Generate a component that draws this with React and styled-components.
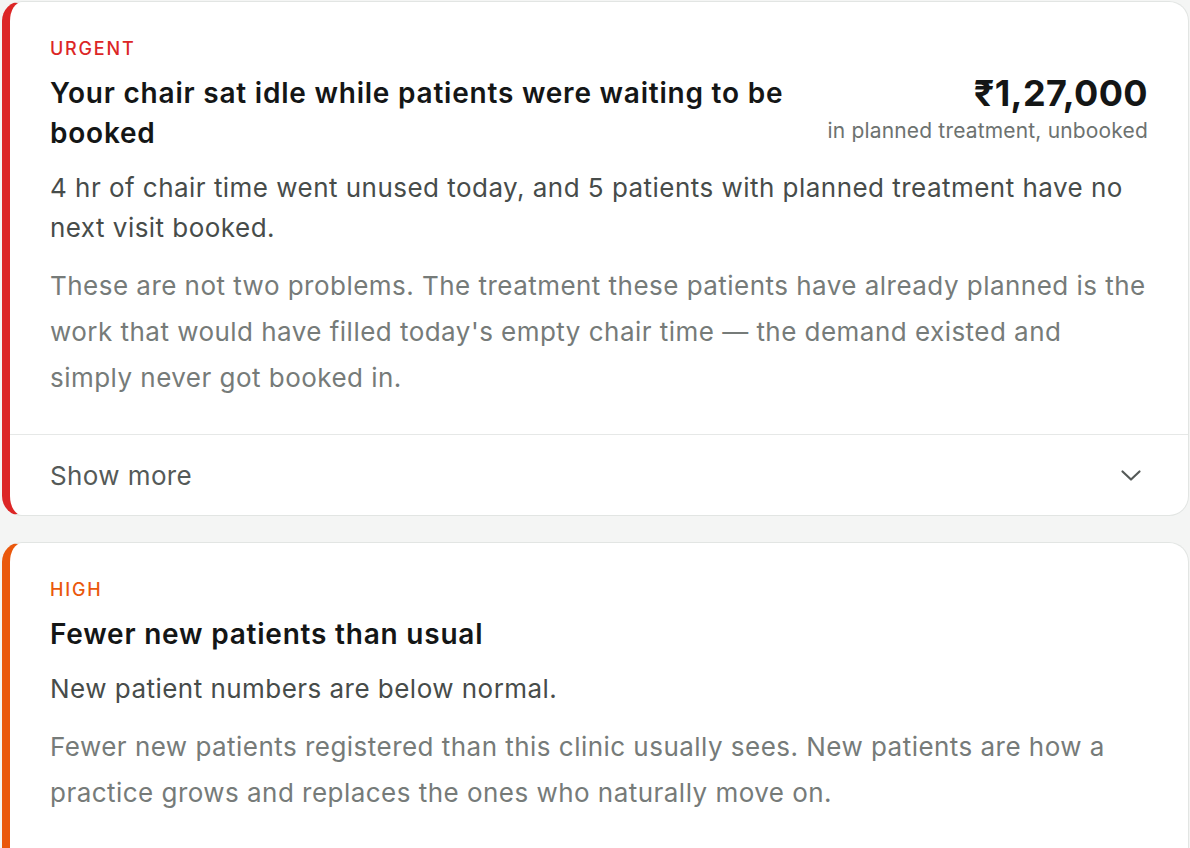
import React from "react"
import styled, { createGlobalStyle } from "styled-components"

const GlobalStyles = createGlobalStyle`
  html, body {
    margin: 0;
    padding: 0;
    background: #f4f5f4;
  }
  body {
    font-family: Inter, "Open Sans", "Liberation Sans", sans-serif;
    -webkit-font-smoothing: antialiased;
  }
`

const levels = {
  urgent: { label: "URGENT", color: "#dc2626" },
  high: { label: "HIGH", color: "#ea580c" },
}

const insights = [
  {
    level: "urgent",
    title: "Your chair sat idle while patients were waiting to be booked",
    amount: "₹1,27,000",
    amountNote: "in planned treatment, unbooked",
    summary:
      "4 hr of chair time went unused today, and 5 patients with planned treatment have no next visit booked.",
    detail:
      "These are not two problems. The treatment these patients have already planned is the work that would have filled today's empty chair time — the demand existed and simply never got booked in.",
  },
  {
    level: "high",
    title: "Fewer new patients than usual",
    summary: "New patient numbers are below normal.",
    detail:
      "Fewer new patients registered than this clinic usually sees. New patients are how a practice grows and replaces the ones who naturally move on.",
  },
]

const ChevronDown = () => (
  <svg width="24" height="24" viewBox="0 0 24 24" fill="none" stroke="currentColor" strokeWidth="2.2" strokeLinecap="round" strokeLinejoin="round">
    <path d="M3.5 8.5l8.5 8 8.5-8" />
  </svg>
)

class App extends React.Component {
  render() {
    return (
      <Page>
        <GlobalStyles />
        {insights.map((item, i) => (
          <Card key={i} accent={levels[item.level].color}>
            <CardBody>
              <Level color={levels[item.level].color}>{levels[item.level].label}</Level>
              <Header>
                <Title>{item.title}</Title>
                {item.amount && (
                  <Impact>
                    <Amount>{item.amount}</Amount>
                    <AmountNote>{item.amountNote}</AmountNote>
                  </Impact>
                )}
              </Header>
              <Summary>{item.summary}</Summary>
              <Detail>{item.detail}</Detail>
            </CardBody>
            <Toggle>
              <span>Show more</span>
              <ChevronDown />
            </Toggle>
          </Card>
        ))}
      </Page>
    )
  }
}

const Page = styled.div`
  display: flex;
  flex-direction: column;
  gap: 26px;
  padding: 1px 1px 40px 2px;
`

const Card = styled.div`
  background: #fff;
  border: 1px solid #e2e5e3;
  border-left: 8px solid ${p => p.accent};
  border-radius: 20px;
  overflow: hidden;
`

const CardBody = styled.div`
  padding: 35px 40px 33px 40px;
  display: flex;
  flex-direction: column;
`

const Level = styled.div`
  color: ${p => p.color};
  font-size: 18px;
  line-height: 24px;
  font-weight: 500;
  letter-spacing: 0.1em;
`

const Header = styled.div`
  display: flex;
  justify-content: space-between;
  align-items: flex-start;
  gap: 30px;
  margin-top: 12px;
`

const Title = styled.h2`
  margin: 0;
  max-width: 770px;
  font-size: 28px;
  line-height: 40px;
  font-weight: 600;
  color: #141616;
  letter-spacing: 0.028em;
`

const Impact = styled.div`
  display: flex;
  flex-direction: column;
  align-items: flex-end;
  flex-shrink: 0;
`

const Amount = styled.div`
  font-size: 36px;
  line-height: 40px;
  font-weight: 700;
  color: #141616;
  letter-spacing: 0.01em;
`

const AmountNote = styled.div`
  font-size: 21px;
  line-height: 26px;
  color: #6d7270;
  margin-top: 5px;
  letter-spacing: 0.008em;
`

const Summary = styled.p`
  margin: 15px 0 0;
  font-size: 26px;
  line-height: 40px;
  color: #474c4a;
  letter-spacing: 0.018em;
`

const Detail = styled.p`
  margin: 15px 0 0;
  font-size: 26px;
  line-height: 46px;
  color: #767b79;
  letter-spacing: 0.018em;
`

const Toggle = styled.div`
  display: flex;
  align-items: center;
  justify-content: space-between;
  height: 80px;
  padding: 0 45px 0 40px;
  border-top: 1px solid #e6e8e7;
  font-size: 26px;
  color: #555a58;
  letter-spacing: 0.015em;
  svg {
    color: #555a58;
  }
`

export default App
